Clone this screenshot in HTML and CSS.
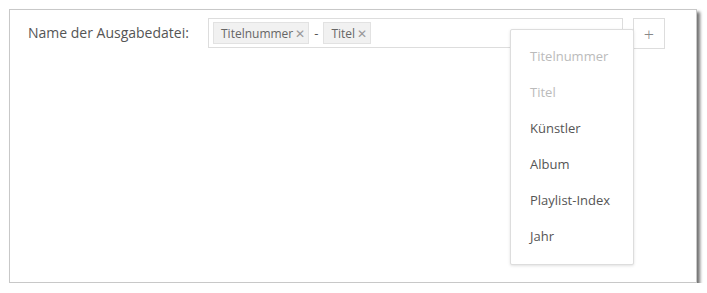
FILE: index.html
```html
<!DOCTYPE html>
<html lang="de">
<head>
    <meta charset="UTF-8">
    <meta name="viewport" content="width=device-width, initial-scale=1.0">
    <link rel="stylesheet" href="styles.css">
    <title>Ausgabedatei</title>
</head>
<body>
    <div class="panel">
        <div class="row">
            <label class="label">Name der Ausgabedatei:</label>
            <div class="field">
                <span class="tag">Titelnummer<span class="remove">&#x2715;</span></span>
                <span class="sep">-</span>
                <span class="tag">Titel<span class="remove">&#x2715;</span></span>

                <ul class="dropdown">
                    <li class="disabled">Titelnummer</li>
                    <li class="disabled">Titel</li>
                    <li>Künstler</li>
                    <li>Album</li>
                    <li>Playlist-Index</li>
                    <li>Jahr</li>
                </ul>
            </div>
            <button class="add">+</button>
        </div>
    </div>
</body>
</html>
```

FILE: styles.css
```css
body {
    margin: 0;
    background: #fff;
    font-family: "Open Sans", Arial, sans-serif;
    color: #555;
}

.panel {
    margin: 9px 0 0 9px;
    width: 686px;
    height: 272px;
    border: 1px solid #c8c8c8;
    background: #fff;
    box-shadow: 3px 3px 3px rgba(0, 0, 0, 0.55);
}

.row {
    display: flex;
    align-items: flex-start;
    padding: 8px 0 0 18px;
}

.label {
    font-size: 14px;
    line-height: 30px;
    width: 180px;
    color: #555;
}

.field {
    position: relative;
    display: flex;
    align-items: center;
    gap: 5px;
    width: 405px;
    height: 28px;
    padding: 0 4px;
    border: 1px solid #ddd;
}

.tag {
    display: inline-flex;
    align-items: center;
    height: 20px;
    padding: 0 3px 0 7px;
    background: #f1f1f1;
    border: 1px solid #e2e2e2;
    font-size: 12px;
    color: #666;
}

.remove {
    margin-left: 2px;
    font-size: 12px;
    font-weight: 300;
    color: #999;
}

.sep {
    font-size: 13px;
    color: #555;
}

.add {
    margin-left: 10px;
    width: 32px;
    height: 31px;
    border: 1px solid #ddd;
    background: #fff;
    color: #888;
    font-size: 18px;
    font-weight: 300;
    font-family: inherit;
    padding: 0;
}

.dropdown {
    position: absolute;
    left: 301px;
    top: 10px;
    width: 122px;
    margin: 0;
    padding: 8px 0 10px;
    list-style: none;
    background: #fff;
    border: 1px solid #ddd;
    border-radius: 2px;
    box-shadow: 0 1px 3px rgba(0, 0, 0, 0.12);
}

.dropdown li {
    padding: 0 19px;
    line-height: 36px;
    font-size: 13px;
    color: #555;
}

.dropdown li.disabled {
    color: #bbb;
}
```
